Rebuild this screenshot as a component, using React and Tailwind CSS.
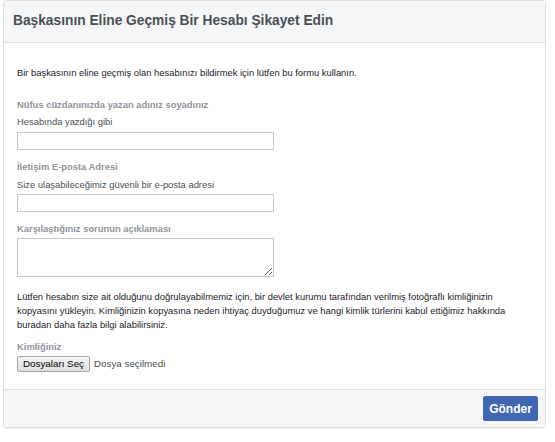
export default function App() {
  return (
    <div className="w-[555px] h-[442px] bg-white" style={{ fontFamily: '"Liberation Sans", Arial, sans-serif' }}>
      <div className="ml-[3px] w-[543px] border border-[#dddfe2] rounded-[3px] shadow-[0_1px_1px_rgba(0,0,0,0.06)] overflow-hidden">
        <div className="h-[42px] bg-[#f5f6f7] border-b border-[#e5e5e5] flex items-center px-[9px]">
          <h1 className="text-[13.75px] font-bold text-[#4b4f56]">Başkasının Eline Geçmiş Bir Hesabı Şikayet Edin</h1>
        </div>
        <div className="px-[13px] pt-[23px] pb-[17px] text-[9.4px] leading-[14px] text-[#1d2129]">
          <p>Bir başkasının eline geçmiş olan hesabınızı bildirmek için lütfen bu formu kullanın.</p>
          <div className="mt-[18px] font-bold text-[#90949c]">Nüfus cüzdanınızda yazan adınız soyadınız</div>
          <div className="mt-[3px] text-[#4b4f56]">Hesabında yazdığı gibi</div>
          <input type="text" className="mt-[3px] block w-[257px] h-[18px] border border-[#bdc7d8] bg-white outline-none" />
          <div className="mt-[10px] font-bold text-[#90949c]">İletişim E-posta Adresi</div>
          <div className="mt-[4px] text-[#4b4f56]">Size ulaşabileceğimiz güvenli bir e-posta adresi</div>
          <input type="text" className="mt-[2px] block w-[257px] h-[18px] border border-[#bdc7d8] bg-white outline-none" />
          <div className="mt-[10px] font-bold text-[#90949c]">Karşılaştığınız sorunun açıklaması</div>
          <textarea className="mt-[2px] block w-[257px] h-[39px] border border-[#bdc7d8] bg-white outline-none resize" />
          <p className="mt-[13px]">
            Lütfen hesabın size ait olduğunu doğrulayabilmemiz için, bir devlet kurumu tarafından verilmiş fotoğraflı kimliğinizin kopyasını yükleyin. Kimliğinizin kopyasına neden ihtiyaç duyduğumuz ve hangi kimlik türlerini kabul ettiğimiz hakkında buradan daha fazla bilgi alabilirsiniz.
          </p>
          <div className="mt-[8px] font-bold text-[#90949c]">Kimliğiniz</div>
          <div className="mt-[2px] flex items-center gap-[4px]">
            <span className="h-[16px] w-[73px] flex items-center justify-center border border-[#a6a6a6] rounded-[2px] bg-gradient-to-b from-[#f6f6f6] to-[#dedede] text-[9.8px] text-black">Dosyaları Seç</span>
            <span className="text-[9.8px] text-[#4b4f56]">Dosya seçilmedi</span>
          </div>
        </div>
        <div className="h-[38px] bg-[#f5f6f7] border-t border-[#e5e5e5] flex items-center justify-end pr-[7px]">
          <button className="w-[55px] h-[25px] bg-[#4267b2] border border-[#4267b2] rounded-[2px] text-white text-[12px] font-bold">Gönder</button>
        </div>
      </div>
    </div>
  );
}
